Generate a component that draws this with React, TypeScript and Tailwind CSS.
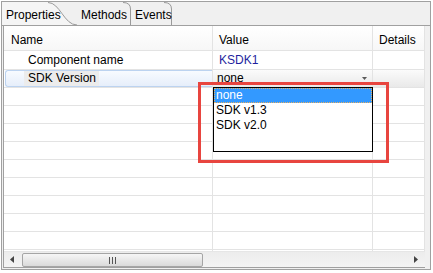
import React from "react";

const tabs = [
  { label: "Properties", w: "w-[75px]" },
  { label: "Methods", w: "w-[54px]" },
  { label: "Events", w: "w-[44px]" },
];

function TabBar() {
  return (
    <div className="relative h-[24px] border-b border-[#a0a0a0] flex">
      <svg className="absolute left-0 top-0" width="180" height="24" viewBox="0 0 180 24">
        <path d="M0 0 L46 0 C58 0 62 23 75 23 L0 23 Z" fill="#f5f5f5" />
        <path d="M46 0.5 C58 0.5 62 23 75 23" fill="none" stroke="#9a9a9a" />
        <path d="M121 0.5 Q128.5 0.5 128.5 7 L128.5 23" fill="none" stroke="#9a9a9a" />
        <path d="M162 0.5 Q169.5 0.5 169.5 7 L169.5 23" fill="none" stroke="#9a9a9a" />
      </svg>
      {tabs.map((t) => (
        <div key={t.label} className={`${t.w} relative pl-[4px] pt-[5px] leading-[16px]`}>
          {t.label}
        </div>
      ))}
    </div>
  );
}

function Row({ tall, name, value }: { tall?: boolean; name?: string; value?: React.ReactNode }) {
  return (
    <div className={`flex border-b border-[#e3e3e3] ${tall ? "h-[19px]" : "h-[18px]"}`}>
      <div className="w-[209px] border-r border-[#e3e3e3] pl-[24px] leading-[18px] truncate">{name}</div>
      <div className="w-[160px] border-r border-[#e3e3e3] pl-[6px] leading-[18px]">{value}</div>
      <div className="w-[52px] border-r border-[#e3e3e3]" />
    </div>
  );
}

function SelectedRow() {
  return (
    <div className="flex h-[18px] border-b border-[#e3e3e3]">
      <div className="w-[209px] border-r border-[#e3e3e3] pl-[1px]">
        <div className="h-full flex border border-r-0 border-[#bcd3f0] rounded-l-[3px] bg-gradient-to-b from-[#f8fbff] to-[#e6eefa]">
          <div className="w-[18px]" />
          <span className="bg-[#ececec] pl-[4px] pr-[3px] leading-[15px]">SDK Version</span>
        </div>
      </div>
      <div className="w-[160px] border-r border-[#e3e3e3] flex items-center justify-between pl-[4px] pr-[5px] bg-gradient-to-b from-[#fbfbfb] to-[#e9e9e9]">
        <span className="leading-[17px]">none</span>
        <svg width="5" height="3" viewBox="0 0 5 3">
          <path d="M0 0 H5 L2.5 3 Z" fill="#5a5a5a" />
        </svg>
      </div>
      <div className="w-[52px] border-r border-[#e3e3e3] bg-gradient-to-b from-[#fbfbfb] to-[#e9e9e9]" />
    </div>
  );
}

function ScrollBar() {
  return (
    <div className="h-[16px] flex items-stretch bg-gradient-to-b from-[#ececec] to-[#f4f4f4] border-t border-[#e6e6e6]">
      <div className="w-[18px] flex items-center pl-[6px]">
        <svg width="4" height="7" viewBox="0 0 4 7">
          <path d="M4 0 V7 L0 3.5 Z" fill="#444" />
        </svg>
      </div>
      <div className="w-[181px] mt-[1px] rounded-[2px] border border-[#a5a5a5] bg-gradient-to-b from-[#f6f6f6] to-[#dadada] flex items-center justify-center">
        <svg width="7" height="7" viewBox="0 0 7 7">
          <rect x="0" y="0" width="1" height="7" fill="#555" />
          <rect x="3" y="0" width="1" height="7" fill="#555" />
          <rect x="6" y="0" width="1" height="7" fill="#555" />
        </svg>
      </div>
      <div className="flex-1" />
      <div className="w-[18px] flex items-center justify-center">
        <svg width="4" height="7" viewBox="0 0 4 7">
          <path d="M0 0 V7 L4 3.5 Z" fill="#444" />
        </svg>
      </div>
    </div>
  );
}

export default function App() {
  return (
    <div className="relative w-[433px] h-[273px] overflow-hidden bg-white pl-[1px] pt-[1px] font-['Liberation_Sans',Arial,sans-serif] text-[12px] text-black">
      <div className="w-[430px] h-[269px] border border-[#a0a0a0] bg-[#f0f0f0] flex flex-col">
        <TabBar />
        <div className="flex-1 flex pl-[1px] pr-[5px] pb-[1px] min-h-0">
          <div className="w-[422px] border-l border-b border-[#a0a0a0] bg-white flex flex-col">
            <div className="h-[25px] flex border-b border-[#e3e3e3] bg-gradient-to-b from-white to-[#f7f7f7]">
              <div className="w-[209px] border-r border-[#e3e3e3] pl-[7px] pt-[6px] leading-[16px]">Name</div>
              <div className="w-[160px] border-r border-[#e3e3e3] pl-[6px] pt-[6px] leading-[16px]">Value</div>
              <div className="w-[52px] border-r border-[#e3e3e3] pl-[6px] pt-[6px] leading-[16px]">Details</div>
            </div>
            <div className="flex-1 overflow-hidden">
              <Row tall name="Component name" value={<span className="text-[#1f1f9e]">KSDK1</span>} />
              <SelectedRow />
              {Array.from({ length: 10 }).map((_, i) => (
                <Row key={i} />
              ))}
            </div>
            <ScrollBar />
          </div>
        </div>
      </div>

      <div className="absolute left-[213px] top-[87px] w-[160px] h-[65px] border border-black bg-white">
        <div className="h-[15px] leading-[13px] pl-[1px] bg-[#3399ff] text-white border border-dotted border-[#e8b060]">none</div>
        <div className="h-[15px] leading-[15px] pl-[2px]">SDK v1.3</div>
        <div className="h-[15px] leading-[15px] pl-[2px]">SDK v2.0</div>
      </div>

      <div className="absolute left-[198px] top-[82px] w-[191px] h-[81px] border-[3px] border-[#e8453f]" />
    </div>
  );
}
